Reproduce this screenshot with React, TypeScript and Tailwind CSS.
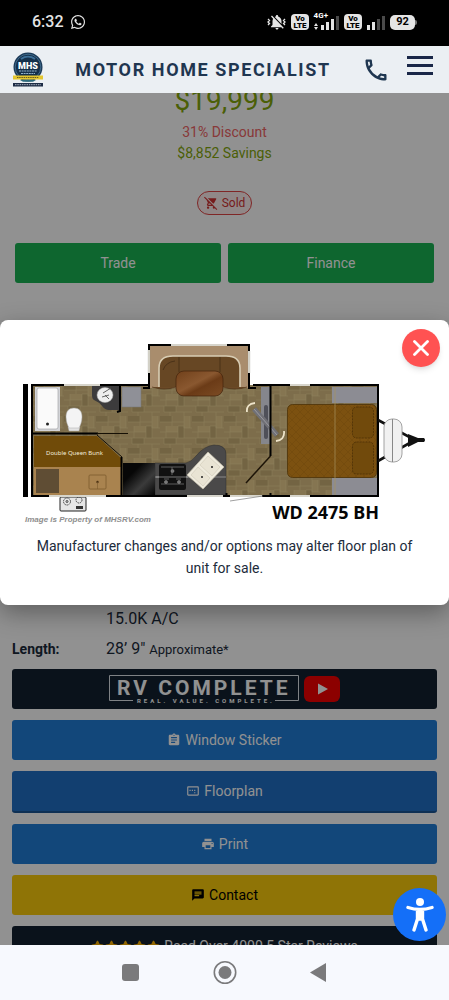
import type { ReactNode } from "react";
import { FaStar, FaWhatsapp } from "react-icons/fa";
import {
  MdAssignment,
  MdChat,
  MdNotificationsOff,
  MdOutlineImageAspectRatio,
  MdOutlinePhone,
  MdPrint,
  MdRemoveShoppingCart,
} from "react-icons/md";

const actionBase = "flex w-full items-center justify-center gap-1 rounded-[3px] text-sm";

function VoLte() {
  return (
    <span className="flex h-4 w-[18px] flex-col items-center justify-center rounded bg-[#e4e4e4] text-[8px] font-black leading-[7px] text-black">
      <span>Vo</span>
      <span>LTE</span>
    </span>
  );
}

function Signal({ level, network }: { level: number; network?: string }) {
  const bars = [5, 8, 11, 14];
  return (
    <span className="relative flex h-4 items-end gap-[2px]">
      {network && (
        <span className="absolute -top-[2px] right-[11px] text-[8px] font-bold leading-[8px] text-white">
          {network}
        </span>
      )}
      {network && (
        <svg viewBox="0 0 4 7" className="mr-px h-[7px] w-1" fill="#e4e4e4">
          <path d="M2 0l2 3H0zM2 7L0 4h4z" />
        </svg>
      )}
      {bars.map((h, i) => (
        <span
          key={h}
          className={i < level ? "w-[3px] bg-[#e4e4e4]" : "w-[3px] bg-[#4a4a4a]"}
          style={{ height: h }}
        />
      ))}
    </span>
  );
}

function StatusBar() {
  return (
    <div className="flex h-[46px] shrink-0 items-center justify-between bg-black pb-0.5 pl-8 pr-8 text-[#e4e4e4]">
      <div className="flex items-center gap-[6px]">
        <span className="text-base font-medium">6:32</span>
        <FaWhatsapp className="size-4" />
      </div>
      <div className="flex items-center gap-[5px]">
        <span className="relative flex w-[19px] justify-center">
          <MdNotificationsOff className="size-[18px]" />
          <svg viewBox="0 0 19 18" className="absolute inset-0" fill="none" stroke="#e4e4e4" strokeWidth="1.3">
            <path d="M1 6l1.500 1.500L1 9l1.500 1.500L1 12M18 6l-1.500 1.500L18 9l-1.500 1.500L18 12" />
          </svg>
        </span>
        <VoLte />
        <Signal level={3} network="4G+" />
        <VoLte />
        <Signal level={2} />
        <span className="flex items-center">
          <span className="flex h-[15px] w-[25px] items-center justify-center rounded-[5px] bg-[#e4e4e4] text-[11px] font-bold text-black">
            92
          </span>
          <span className="h-[5px] w-[2px] rounded-r bg-[#777]" />
        </span>
      </div>
    </div>
  );
}

function Logo() {
  return (
    <svg viewBox="0 0 32 36" className="h-9 w-8 shrink-0" aria-hidden="true">
      <circle cx="16" cy="15" r="14.500" fill="#1b3a58" />
      <circle cx="16" cy="15" r="12.800" fill="#15304b" stroke="#4f7fa3" strokeWidth=".7" />
      <path d="M9 7a12 12 0 0114 0" stroke="#3c6f98" strokeWidth="2" fill="none" />
      <text x="16" y="16.500" textAnchor="middle" fontSize="9" fontWeight="900" fill="#fff">
        MHS
      </text>
      <path d="M7 19h18M9 21.500h14" stroke="#8fb0c8" strokeWidth="1" strokeDasharray="2 .6" />
      <path d="M1 23.500h30v4H1z" fill="#e3c62f" />
      <path d="M5 25.500h22" stroke="#6c5f1d" strokeWidth="1" strokeDasharray="1.500 .7" />
      <path d="M8 28h16l-3 1.800H11z" fill="#2c6b7d" />
      <path d="M1 31h30v3.500H1z" fill="#1d2c45" />
      <path d="M3 32.700h26" stroke="#aab4c4" strokeWidth="1" strokeDasharray="1.500 .8" />
    </svg>
  );
}

function Header() {
  return (
    <header className="flex h-[47px] shrink-0 items-center bg-[#ebeff3] pl-3 pr-4 text-[#1f3650]">
      <Logo />
      <h1 className="flex-1 text-center text-lg font-bold tracking-[1.6px]">MOTOR HOME SPECIALIST</h1>
      <button type="button" aria-label="Call" className="mr-[17px]">
        <MdOutlinePhone className="size-7" />
      </button>
      <button type="button" aria-label="Menu" className="mb-2 flex w-[26px] flex-col gap-[5px]">
        <span className="h-[3px] w-full bg-[#1a2748]" />
        <span className="h-[3px] w-full bg-[#1a2748]" />
        <span className="h-[3px] w-full bg-[#1a2748]" />
      </button>
    </header>
  );
}

function Action({
  className,
  icon,
  children,
}: {
  className: string;
  icon?: ReactNode;
  children: ReactNode;
}) {
  return (
    <button type="button" className={`${actionBase} ${className}`}>
      {icon}
      {children}
    </button>
  );
}

function RvComplete() {
  return (
    <button
      type="button"
      className="flex h-10 w-full items-center justify-center gap-[5px] rounded-[3px] bg-[#132131] text-white"
    >
      <svg viewBox="0 0 190 30" className="h-[30px] w-[190px]" aria-hidden="true">
        <path d="M24 26.500H.5v-25h189v25H166" fill="none" stroke="#dfe5ea" />
        <text x="8" y="21" fontSize="21" fontWeight="700" fill="#fff" className="tracking-[3px]">
          RV COMPLETE
        </text>
        <text x="28" y="29" fontSize="6" fontWeight="700" fill="#fff" className="tracking-[3px]">
          REAL. VALUE. COMPLETE.
        </text>
      </svg>
      <svg viewBox="0 0 36 26" className="h-[26px] w-9" aria-hidden="true">
        <rect width="36" height="26" rx="6" fill="#f60000" />
        <path d="M14 7.500v11l10-5.500z" fill="#fff" />
      </svg>
    </button>
  );
}

function FloorPlan() {
  return (
    <svg viewBox="22 340 405 186" className="w-full" role="img" aria-label="WD 2475 BH floor plan">
      <defs>
        <pattern id="tiles" width="32" height="32" patternUnits="userSpaceOnUse">
          <rect width="32" height="32" fill="#7d6d4b" />
          <path d="M0 0h12v6H0zM18 10h6v12h-6zM4 22h12v6H4z" fill="#736443" />
          <path d="M24 0h6v12h-6zM6 10h12v6H6z" fill="#857551" />
          <path
            d="M0 6h24M12 0v10M24 0v12M30 0v12M0 16h18M6 10v12M18 10h6v12h-6zM24 12h8M24 22h8M0 22h18M4 22v6h12v-6M16 28h16M24 28v4M10 28v4"
            stroke="#8d7e5b"
            strokeWidth=".5"
            fill="none"
          />
        </pattern>
        <linearGradient id="fridge" x1="0" y1="0" x2="1" y2="1">
          <stop offset=".3" stopColor="#070707" />
          <stop offset=".65" stopColor="#3b3b3b" />
          <stop offset="1" stopColor="#050505" />
        </linearGradient>
        <linearGradient id="table" x1="0" y1="0" x2="1" y2="1">
          <stop offset="0" stopColor="#70401a" />
          <stop offset=".45" stopColor="#8a5830" />
          <stop offset=".6" stopColor="#6b3b17" />
          <stop offset="1" stopColor="#7c4c24" />
        </linearGradient>
        <pattern id="quilt" width="8" height="8" patternUnits="userSpaceOnUse">
          <rect width="8" height="8" fill="#7c5110" />
          <path d="M0 0l8 8M8 0L0 8" stroke="#744a0e" strokeWidth=".8" />
        </pattern>
      </defs>

      <rect x="23" y="384" width="5" height="113" fill="#000" />
      <rect x="32" y="385" width="346" height="111" fill="url(#tiles)" />

      {/* slide-out with dinette */}
      <rect x="149" y="345" width="100" height="43" fill="#a98d6d" />
      <path d="M159 387v-19q0-12 14-12h53q14 0 14 12v19z" fill="#674724" />
      <path d="M159 387v-19q0-12 14-12h53q14 0 14 12v19" fill="none" stroke="#d8cdb4" strokeWidth="1.600" />
      <path d="M152 387q12 4 24 0M223 387q12 4 24 0" stroke="#4f3419" fill="#6b4926" strokeWidth=".7" />
      <path d="M179 357v15M220 357v15M163 370q3-8 12-9" stroke="#3e2812" strokeWidth=".7" fill="none" />
      <rect x="176" y="371" width="47" height="25" rx="8" fill="url(#table)" stroke="#42230c" strokeWidth=".7" />

      {/* bath */}
      <rect x="35" y="387" width="25" height="44" fill="#d3d4d8" />
      <rect x="37" y="388" width="21" height="41" rx="2" fill="#fafafa" stroke="#9b9ca0" strokeWidth=".6" />
      <circle cx="47.500" cy="424" r="1.500" fill="#222" />
      <path d="M68 427h12l-1 4H69z" fill="#e3e3e3" stroke="#999" strokeWidth=".4" />
      <path d="M66 417c0-6 3-9 8-9s8 3 8 9c0 5-2 9-3 11h-10c-1-2-3-6-3-11z" fill="#f4f4f4" stroke="#aaa" strokeWidth=".5" />
      <path d="M92 386h28v24h-11q-4 0-7-4-3-4-8-6-2-1-2-5z" fill="#3c3b3c" />
      <ellipse cx="105" cy="395" rx="8" ry="7.500" fill="#eee" stroke="#aaa" strokeWidth=".5" />
      <path d="M103 393l8-5M105 395l4 4M102 397l7-2" stroke="#555" strokeWidth=".9" />
      <rect x="122" y="387" width="19" height="20" fill="#8f9097" stroke="#777" strokeWidth=".5" />

      {/* bunks */}
      <path d="M34 436h63l24 22v9H34z" fill="#704b09" />
      <rect x="34" y="467" width="87" height="28" fill="#a9834f" />
      <rect x="36" y="469" width="23" height="24" fill="#5f4d34" />
      <rect x="89" y="475" width="17" height="14" rx="1" fill="none" stroke="#7c5a2d" strokeWidth=".8" />
      <circle cx="97.500" cy="482" r="1.200" fill="#4b3213" />
      <path d="M97.500 482v7" stroke="#7c5a2d" strokeWidth=".6" />
      <text x="46" y="455" fontSize="6" fill="#f3ecd9" fontFamily="'Noto Sans', sans-serif">
        Double Queen Bunk
      </text>

      {/* kitchen */}
      <path d="M155 463h31q5-1 10-7 8-10 18-11 12 0 12 9v41h-71z" fill="#4a4949" stroke="#2d2d2d" strokeWidth=".5" />
      <path d="M154 477h72" stroke="#b9b9b9" strokeWidth=".6" />
      <rect x="123" y="463" width="32" height="32" fill="url(#fridge)" />
      <rect x="159" y="464" width="27" height="26" rx="2" fill="#111" />
      <path d="M161 467h23M161 484h23M172 467v8M164 479h5M176 479h5" stroke="#666" strokeWidth=".9" />
      <path d="M156 477h32" stroke="#a5a5a5" strokeWidth=".7" />
      <g fill="#777" stroke="#aaa" strokeWidth=".4">
        <circle cx="172.500" cy="471" r="1.600" />
        <circle cx="166" cy="482" r="1.600" />
        <circle cx="179" cy="482" r="1.600" />
      </g>
      <path d="M187 475l21-23 16 15-21 22z" fill="#efebdd" stroke="#c6c0ac" strokeWidth=".7" strokeLinejoin="round" />
      <path d="M200 465l8-9 12 11-8 9zM191 475l7-8 12 11-7 8z" fill="#e9e4d4" stroke="#cbc5b2" strokeWidth=".5" />
      <circle cx="212" cy="467" r="1" fill="#222" />
      <circle cx="202" cy="477" r="1" fill="#222" />

      {/* tv */}
      <rect x="261" y="387" width="9" height="57" fill="#85868c" />
      <rect x="264" y="405" width="4" height="34" rx="2" fill="#4f5059" />
      <path d="M254 409l23 26" stroke="#707076" strokeWidth="5" />
      <path d="M254 409l23 26" stroke="#9a9aa0" strokeWidth="1" />
      <path d="M247 412q-1-8 8-9M284 431q1 9-8 10" stroke="#eee4ca" strokeWidth="1.800" fill="none" />

      {/* bedroom */}
      <rect x="332" y="387" width="45" height="16" fill="#8c8c93" />
      <rect x="332" y="478" width="45" height="17" fill="#8c8c93" />
      <rect x="287.500" y="404.500" width="89" height="73" rx="5" fill="url(#quilt)" stroke="#4d3208" strokeWidth=".8" />
      <rect x="352.500" y="407" width="21" height="31" rx="4" fill="#714a0c" stroke="#472d06" strokeWidth=".7" strokeDasharray="2 1" />
      <rect x="352.500" y="442" width="21" height="32" rx="4" fill="#714a0c" stroke="#472d06" strokeWidth=".7" strokeDasharray="2 1" />
      <path d="M335 387v108" stroke="#a7935f" strokeWidth=".7" />

      {/* outside kitchen */}
      <rect x="60" y="497" width="26" height="14" rx="1" fill="#e6e6e6" stroke="#222" />
      <g fill="none" stroke="#333" strokeWidth=".9">
        <circle cx="67" cy="501.500" r="3.500" strokeDasharray="1.500 .7" />
        <circle cx="67" cy="501.500" r="1" />
        <circle cx="79" cy="500" r="3" strokeDasharray="1.500 .7" />
      </g>
      <path d="M76 506h7v3h-7z" fill="#333" />

      {/* walls */}
      <g fill="none" stroke="#000" strokeWidth="2">
        <path d="M149 385H32v111h346V385H253" />
        <path d="M143 388h6v-43h100v43h7" />
        <path d="M32 433.500h66M120 385v26l-3 1M121.500 457v39M270.500 385v71M270.500 493v3M226.500 496v-3" />
      </g>
      <path d="M97 433.500h31M97 435l25 22" stroke="#161005" strokeWidth="1" />
      <path d="M270.500 456L246 483" stroke="#1d1408" strokeWidth="1.500" />
      <g stroke="#8b8b88" strokeWidth="2.200">
        <path d="M64 385h36M171 345h56M149 350v23M249 351v22M49 496h57M187 496h36M230 496h32M290 385h20M290 496h20" />
      </g>
      <g stroke="#f1eee2" strokeWidth="1.400">
        <path d="M64 385h36M171 345h56M149 350v23M249 351v22M49 496h57M187 496h36M230 496h32M290 385h20M290 496h20" />
      </g>
      <path d="M230 501l33-5" stroke="#777" strokeWidth=".7" />

      {/* hitch */}
      <path d="M378 420l37 20-37 21" fill="none" stroke="#111" strokeWidth="2.600" />
      <path d="M408 434l10 4h6q2 2 0 4h-6l-10 5z" fill="#111" />
      <rect x="384" y="419" width="18" height="43" rx="8" fill="#f1f1f1" stroke="#999" strokeWidth=".9" />
      <path d="M392.500 419v43" stroke="#888" strokeWidth="1" />

      <text x="25" y="522" fontSize="8" fontWeight="700" fontStyle="italic" fill="#8e8e8e" fontFamily="'Liberation Sans', sans-serif">
        Image is Property of MHSRV.com
      </text>
      <text x="379" y="519" textAnchor="end" fontSize="18" fontWeight="700" fill="#050505" fontFamily="'Noto Sans', sans-serif">
        WD 2475 BH
      </text>
    </svg>
  );
}

function NavBar() {
  return (
    <nav className="flex h-[55px] shrink-0 items-center justify-center gap-[72px] bg-[#f7f9fe] text-[#7a7a7c]">
      <button type="button" aria-label="Recent apps">
        <svg viewBox="0 0 22 24" className="h-6 w-[22px]" fill="currentColor">
          <rect x="3" y="3" width="17" height="17" rx="3" />
        </svg>
      </button>
      <button type="button" aria-label="Home">
        <svg viewBox="0 0 24 24" className="size-6" fill="currentColor">
          <circle cx="12" cy="11.500" r="10.700" fill="none" stroke="currentColor" strokeWidth="1.600" />
          <circle cx="12" cy="11.500" r="6.500" />
        </svg>
      </button>
      <button type="button" aria-label="Back">
        <svg viewBox="0 0 22 24" className="h-6 w-[22px]" fill="currentColor">
          <path d="M17 2v19L1 11.500z" />
        </svg>
      </button>
    </nav>
  );
}

export default function App() {
  return (
    <div className="flex h-screen flex-col overflow-hidden bg-white font-['Roboto',sans-serif] text-[#1c2b3b]">
      <StatusBar />
      <Header />

      <div className="relative min-h-0 flex-1 overflow-hidden">
        <main className="-mt-2 px-3">
          <div className="text-center text-sm leading-[21px]">
            <p className="text-[28px] leading-8 text-[#84a80c]">$19,999</p>
            <p className="mt-[5px] text-[#f06464]">31% Discount</p>
            <p className="text-[#84a80c]">$8,852 Savings</p>
          </div>
          <div className="mt-[27px] flex justify-center">
            <span className="flex h-6 items-center gap-1 rounded-full border border-[#e04444] bg-[#fdeeee] px-1.5 text-xs text-[#d03232]">
              <MdRemoveShoppingCart className="size-[14px]" />
              Sold
            </span>
          </div>
          <div className="mt-7 grid grid-cols-2 gap-[7px] px-[3px] text-white">
            <Action className="h-10 bg-[#19b354]">Trade</Action>
            <Action className="h-10 bg-[#19b354]">Finance</Action>
          </div>

          <dl className="mt-[321px] grid grid-cols-[94px_1fr] text-base leading-[30px]">
            <dd className="col-start-2">15.0K A/C</dd>
            <dt className="text-sm font-bold leading-[30px]">Length:</dt>
            <dd>
              28&rsquo; 9&quot; <span className="text-[13px]">Approximate*</span>
            </dd>
          </dl>

          <div className="mt-1 flex flex-col gap-[11px] text-white">
            <RvComplete />
            <Action className="h-10 bg-[#207dd6]" icon={<MdAssignment className="size-[14px]" />}>
              Window Sticker
            </Action>
            <Action
              className="h-[42px] border-b-2 border-[#1a5594] bg-[#206fc6]"
              icon={<MdOutlineImageAspectRatio className="size-[14px]" />}
            >
              Floorplan
            </Action>
            <Action className="h-10 bg-[#207dd6]" icon={<MdPrint className="size-[14px]" />}>
              Print
            </Action>
            <Action className="h-10 bg-[#fbcc0c] text-black" icon={<MdChat className="size-[14px]" />}>
              Contact
            </Action>
            <Action
              className="h-10 bg-[#132131]"
              icon={
                <span className="flex gap-px text-[#ffb400]">
                  <FaStar className="size-[13px]" />
                  <FaStar className="size-[13px]" />
                  <FaStar className="size-[13px]" />
                  <FaStar className="size-[13px]" />
                  <FaStar className="size-[13px]" />
                </span>
              }
            >
              Read Over 4000 5 Star Reviews
            </Action>
          </div>
        </main>

        <div className="absolute inset-0 flex flex-col justify-center bg-black/43 pb-[113px]">
          <div
            role="dialog"
            aria-modal="true"
            className="relative rounded-lg bg-white px-[22px] pb-[26px] pt-5 shadow-[0_8px_24px_rgba(0,0,0,0.35)]"
          >
            <FloorPlan />
            <p className="mt-[9px] px-2 text-center text-sm leading-[22px]">
              Manufacturer changes and/or options may alter floor plan of unit for sale.
            </p>
            <button
              type="button"
              aria-label="Close"
              className="absolute right-[9px] top-[9px] flex size-[38px] items-center justify-center rounded-full bg-[#ff5252] text-white shadow-md"
            >
              <svg viewBox="0 0 16 16" className="size-4" stroke="currentColor" strokeWidth="2.800" strokeLinecap="round">
                <path d="M1.500 1.500l13 13M14.500 1.500l-13 13" />
              </svg>
            </button>
          </div>
        </div>

        <button
          type="button"
          aria-label="Accessibility options"
          className="absolute bottom-1 right-[3px] flex size-[53px] items-center justify-center rounded-full bg-[#146ff8]"
        >
          <svg viewBox="0 0 28 36" className="h-9 w-7" fill="#fff">
            <circle cx="14" cy="5" r="4" />
            <path
              d="M2 10.500q12 4 24 0M11.500 13v9L8 33M16.500 13v9L20 33M14 14v8"
              fill="none"
              stroke="#fff"
              strokeWidth="3.400"
              strokeLinecap="round"
              strokeLinejoin="round"
            />
          </svg>
        </button>
      </div>

      <NavBar />
    </div>
  );
}
